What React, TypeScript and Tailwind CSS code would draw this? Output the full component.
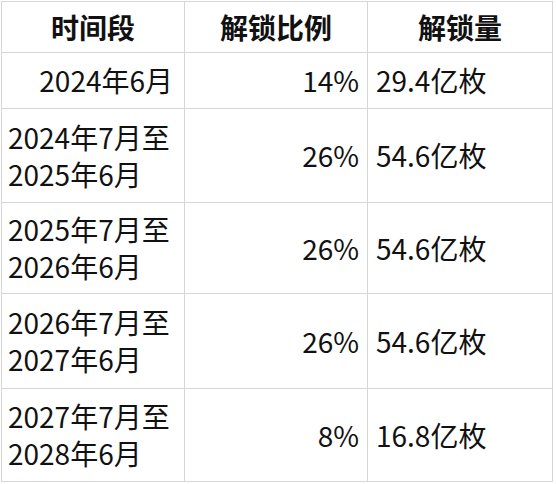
const rows = [
  { period: "2024年6月", wrap: false, ratio: "14%", amount: "29.4亿枚", h: "h-[55px]" },
  { period: "2024年7月至 2025年6月", wrap: true, ratio: "26%", amount: "54.6亿枚", h: "h-[93px]" },
  { period: "2025年7月至 2026年6月", wrap: true, ratio: "26%", amount: "54.6亿枚", h: "h-[90px]" },
  { period: "2026年7月至 2027年6月", wrap: true, ratio: "26%", amount: "54.6亿枚", h: "h-[94px]" },
  { period: "2027年7月至 2028年6月", wrap: true, ratio: "8%", amount: "16.8亿枚", h: "h-[92px]" },
];

export default function App() {
  return (
    <div className="min-h-screen bg-white pl-px pt-px font-['Noto_Sans_CJK_SC',sans-serif] text-[#111]">
      <div className="grid w-[552px] grid-cols-[182px_182px_184px] gap-px bg-[#d6d6d6] p-px text-[28px] leading-[37px]">
        <div className="flex h-[50px] items-center justify-center bg-white font-bold">时间段</div>
        <div className="flex h-[50px] items-center justify-center bg-white font-bold">解锁比例</div>
        <div className="flex h-[50px] items-center justify-center bg-white font-bold">解锁量</div>
        {rows.map((r, i) => {
          const [a, b] = r.period.split(" ");
          return (
            <div key={i} className="contents">
              <div className={`flex items-center bg-white ${r.h} ${r.wrap ? "justify-start pl-[6px]" : "justify-end pr-[11px]"}`}>
                {r.wrap ? (
                  <div>
                    <div>{a}</div>
                    <div>{b}</div>
                  </div>
                ) : (
                  <span>{r.period}</span>
                )}
              </div>
              <div className={`flex items-center justify-end bg-white pr-[8px] ${r.h}`}>{r.ratio}</div>
              <div className={`flex items-center justify-start bg-white pl-[8px] ${r.h}`}>{r.amount}</div>
            </div>
          );
        })}
      </div>
    </div>
  );
}
